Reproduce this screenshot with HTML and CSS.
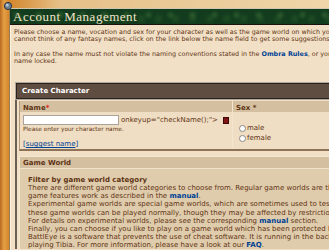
FILE: index.html
```html
<!DOCTYPE html>
<html lang="en">
<head>
    <meta charset="UTF-8">
    <meta name="viewport" content="width=device-width, initial-scale=1.0">
    <title>Account Management</title>
    <link rel="stylesheet" href="styles.css">
</head>
<body>
    <div class="page">
        <svg class="corner" width="10" height="10" viewBox="0 0 10 10">
            <circle cx="5" cy="5" r="3.6" fill="#6d7f93" stroke="#2d3440" stroke-width="1"/>
            <circle cx="4.2" cy="4.2" r="1.4" fill="#b9c7d6"/>
        </svg>
        <div class="box">
            <div class="box-header">
                <span class="box-title">Account Management</span>
            </div>
            <div class="box-content">
                <p class="intro">Please choose a name, vocation and sex for your character as well as the game world on which you want to play. In case you<br>cannot think of any fantasy names, click on the link below the name field to get some suggestions for names.</p>
                <p class="intro">In any case the name must not violate the naming conventions stated in the <a class="link" href="#">Ombra Rules</a>, or your character might get deleted or<br>name locked.</p>

                <div class="table">
                    <div class="table-bar">Create Character</div>
                    <div class="table-body">
                        <div class="name-box">
                            <div class="cell-head">Name<span class="req">*</span></div>
                            <div class="cell-head sex-head">Sex *</div>
                            <div class="cell name-cell">
                                <div class="field">
                                    <input type="text" class="name-input">
                                    <span>onkeyup="checkName();"&gt;</span>
                                    <span class="error-mark"></span>
                                </div>
                                <div class="hint">Please enter your character name.</div>
                                <div class="suggest">[<a href="#">suggest name</a>]</div>
                            </div>
                            <div class="cell sex-cell">
                                <label class="radio-row"><input type="radio" name="sex"> male</label>
                                <label class="radio-row"><input type="radio" name="sex"> female</label>
                            </div>
                        </div>

                        <div class="world-box">
                            <div class="world-head">Game World</div>
                            <div class="world-body">
                                <div class="filter-title">Filter by game world category</div>
                                <div>There are different game world categories to choose from. Regular game worlds are the standard game worlds where all</div>
                                <div>game features work as described in the <a class="link" href="#">manual</a>.</div>
                                <div>Experimental game worlds are special game worlds, which are sometimes used to test new features. Apart from that,</div>
                                <div>these game worlds can be played normally, though they may be affected by restrictions or bugs.</div>
                                <div>For details on experimental worlds, please see the corresponding <a class="link" href="#">manual</a> section.</div>
                                <div>Finally, you can choose if you like to play on a game world which has been protected by BattlEye from the start.</div>
                                <div>BattlEye is a software that prevents the use of cheat software. It is running in the background while you are</div>
                                <div>playing Tibia. For more information, please have a look at our <a class="link" href="#">FAQ</a>.</div>
                            </div>
                        </div>
                    </div>
                </div>
            </div>
        </div>
    </div>
</body>
</html>
```

FILE: styles.css
```css
body {
    margin: 0;
    overflow: hidden;
    font-family: "DejaVu Sans", Verdana, sans-serif;
    color: #5f3415;
    background: linear-gradient(to right, #b9681f 0, #e4a044 4px, #d4862c 9px, #e6c088 60px, #efd6aa 100%);
}
.page {
    position: relative;
    width: 520px;
    padding: 8px 0 0 9px;
}
.corner {
    position: absolute;
    left: 3px;
    top: 1px;
}
.box {
    border-left: 1px solid #9a7a50;
    background-color: #f1e0c6;
    box-shadow: inset 1px 0 #fbf2e0;
    height: 260px;
}
.box-header {
    height: 15px;
    border-top: 1px solid #cfc6ae;
    border-bottom: 1px solid #1b140c;
    padding-left: 3px;
    display: flex;
    align-items: center;
    background-color: #123c1d;
    background-image:
        radial-gradient(circle at 30% 40%, rgba(60, 110, 55, 0.55) 0, transparent 5px),
        radial-gradient(circle at 75% 65%, rgba(50, 95, 45, 0.45) 0, transparent 6px);
    background-size: 22px 15px, 17px 15px;
}
.box-title {
    font-family: "Liberation Serif", serif;
    font-size: 13px;
    letter-spacing: 0.5px;
    color: #efe4c9;
}
.box-content {
    padding: 4px 0 0 4px;
}
.intro {
    margin: 0 0 7px;
    font-size: 6.4px;
    line-height: 7.3px;
    white-space: nowrap;
}
.link {
    color: #004294;
    font-weight: bold;
    text-decoration: none;
}

/* Create Character table */
.table {
    margin: 18px 0 0 1px;
    font-size: 7px;
    line-height: 8px;
}
.table-bar {
    margin: 1px 0 0 1px;
    height: 14px;
    padding-left: 5px;
    display: flex;
    align-items: center;
    background-color: #5f4d41;
    border: 1px solid #2b221c;
    outline: 1px solid #b0a89f;
    color: #fff;
    font-weight: bold;
}
.table-body {
    border-left: 2px solid #6b5f55;
    padding: 2px 0 0 2px;
}
.name-box {
    display: grid;
    grid-template-columns: 212px 1fr;
    border-bottom: 2px solid #8e7358;
    border-left: 1px solid #b49a7c;
}
.cell-head {
    background-color: #d4c0a1;
    padding: 3px 3px 0;
    height: 8px;
    font-weight: bold;
}
.req {
    color: #e02020;
}
.sex-head,
.sex-cell {
    border-left: 1px solid #f4e6ce;
}
.cell {
    background-color: #efdec3;
}
.name-cell {
    padding: 3px 3px 1px;
}
.field {
    display: flex;
    align-items: center;
    gap: 2px;
    height: 10px;
}
.name-input {
    box-sizing: border-box;
    width: 96px;
    height: 10px;
    margin: 0;
    padding: 0;
    border: 1px solid #a9a29a;
    background: #fff;
}
.error-mark {
    width: 5px;
    height: 5px;
    margin-left: 3px;
    background-color: #7e1414;
    border: 1px solid #3c0808;
}
.hint {
    font-size: 5.8px;
    line-height: 7px;
    margin-top: 1px;
}
.suggest {
    margin-top: 7px;
    color: #004294;
}
.suggest a {
    color: #004294;
}
.sex-cell {
    padding: 11px 0 0 6px;
}
.radio-row {
    display: flex;
    align-items: center;
    height: 10px;
    gap: 1px;
}
.radio-row input {
    appearance: none;
    width: 7px;
    height: 7px;
    margin: 0;
    border: 1px solid #8d8a86;
    border-radius: 50%;
    background: #fff;
}

/* Game World box */
.world-box {
    margin-top: 5px;
    border-left: 1px solid #f4e8d0;
    border-top: 1px solid #f4e8d0;
    background-color: #dfccac;
}
.world-head {
    background-color: #d4c0a1;
    border-bottom: 1px solid #f0e2c8;
    padding: 2px 3px 0;
    height: 9px;
    font-weight: bold;
}
.world-body {
    padding: 7px 0 0 8px;
    line-height: 8.1px;
    white-space: nowrap;
}
.filter-title {
    font-weight: bold;
}
```
